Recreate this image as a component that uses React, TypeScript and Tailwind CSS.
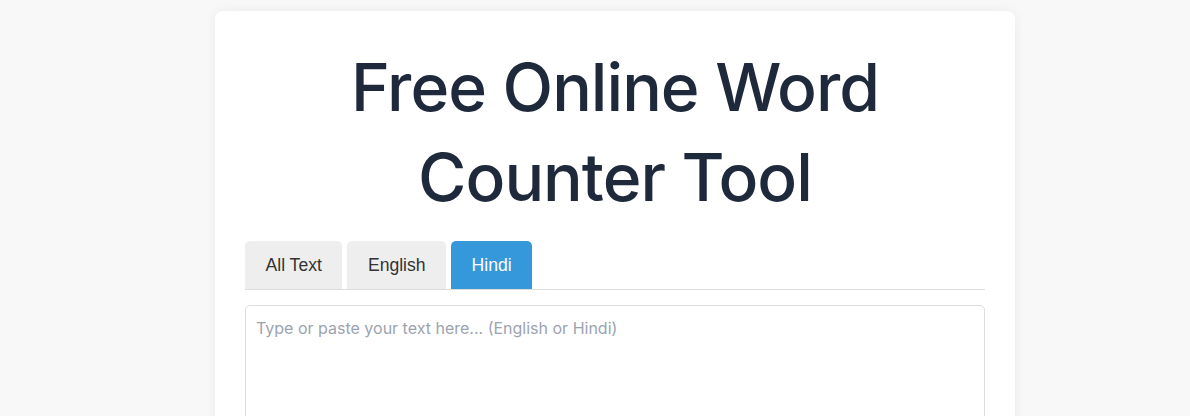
import React from "react";

export default function App() {
  const tabs = ["All Text", "English", "Hindi"];
  return (
    <div className="min-h-screen bg-[#f8f8f8] pt-[11px] pl-[40px] font-['Inter',sans-serif]">
      <div className="mx-auto w-[800px] rounded-[8px] bg-white px-[30px] pt-[31px] pb-[30px] shadow-[0_0_12px_rgba(0,0,0,0.06)]">
        <h1 className="mb-[19px] text-center text-[66px] font-medium leading-[90px] tracking-[-0.015em] text-[#1e293b]">
          Free Online Word
          <br />
          Counter Tool
        </h1>
        <div className="flex gap-[5px] border-b border-[#dddddd]">
          {tabs.map((t, i) => (
            <button
              key={t}
              className={
                i === 2
                  ? "rounded-t-[5px] bg-[#3498db] px-[20.5px] py-[12px] font-['Liberation_Sans',Arial,sans-serif] text-[17.6px] leading-[24px] text-white"
                  : "rounded-t-[5px] bg-[#eeeeee] px-[20.5px] py-[12px] font-['Liberation_Sans',Arial,sans-serif] text-[17.6px] leading-[24px] text-[#333333]"
              }
            >
              {t}
            </button>
          ))}
        </div>
        <textarea
          className="mt-[15px] block h-[200px] w-full resize-none rounded-[5px] border border-[#dddddd] p-[10px] font-['Inter',sans-serif] text-[16px] leading-[24px] text-[#333] outline-none placeholder:text-[#9ca3af]"
          placeholder="Type or paste your text here... (English or Hindi)"
        />
      </div>
    </div>
  );
}
